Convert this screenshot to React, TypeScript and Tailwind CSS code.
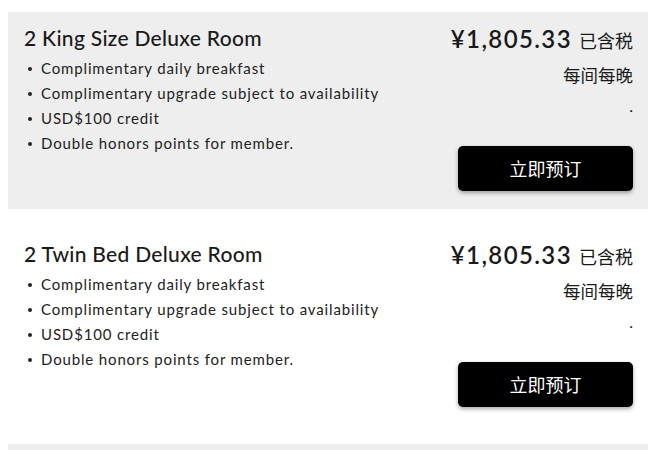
import React from "react";

const perks = [
  "Complimentary daily breakfast",
  "Complimentary upgrade subject to availability",
  "USD$100 credit",
  "Double honors points for member.",
];

function Card({ title, gray }: { title: string; gray?: boolean }) {
  return (
    <div className={`h-[197px] shrink-0 flex justify-between pl-4 pr-[15px] pt-3 ${gray ? "bg-[#eeeeee]" : "bg-white"}`}>
      <div>
        <div className="text-[21px] leading-[28px] font-medium tracking-[0.3px] text-[#1a1a1a]">{title}</div>
        <ul className="mt-1">
          {perks.map((p) => (
            <li key={p} className="flex items-center text-[15px] leading-[25px] tracking-[0.85px] text-[#222]">
              <span className="w-[4px] h-[4px] rounded-full bg-[#222] ml-[4px] mr-[9px]" />
              {p}
            </li>
          ))}
        </ul>
      </div>
      <div className="flex flex-col items-end">
        <div className="flex items-baseline leading-[30px]">
          <span className="text-[24px] font-semibold tracking-[1.4px] text-[#1a1a1a]">¥1,805.33</span>
          <span className="ml-[7px] text-[18px] text-[#1a1a1a]" style={{ fontFamily: '"Noto Sans CJK SC", sans-serif' }}>已含税</span>
        </div>
        <div className="mt-[6px] text-[17.5px] leading-[28px] text-[#1a1a1a]" style={{ fontFamily: '"Noto Sans CJK SC", sans-serif' }}>每间每晚</div>
        <div className="mt-[3px] text-[16px] leading-[28px] text-[#1a1a1a]">.</div>
        <button className="mt-[26px] w-[175px] h-[45px] rounded-[5px] bg-black text-white text-[18px] shadow-[0_2px_4px_rgba(0,0,0,0.35)]" style={{ fontFamily: '"Noto Sans CJK SC", sans-serif' }}>
          立即预订
        </button>
      </div>
    </div>
  );
}

export default function App() {
  return (
    <div className="w-[658px] h-[450px] overflow-hidden bg-white pt-3 pl-2 pr-[10px] flex flex-col gap-[19px]" style={{ fontFamily: 'Lato, "Noto Sans CJK SC", sans-serif' }}>
      <Card title="2 King Size Deluxe Room" gray />
      <Card title="2 Twin Bed Deluxe Room" />
      <div className="h-[197px] shrink-0 bg-[#eeeeee]" />
    </div>
  );
}
